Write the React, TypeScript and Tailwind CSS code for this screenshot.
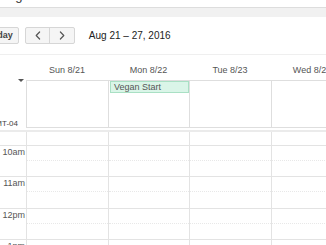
import * as React from "react"

const days = ["Sun 8/21", "Mon 8/22", "Tue 8/23", "Wed 8/24"]

const hours = [
  { label: "10am", height: "h-[31px]" },
  { label: "11am", height: "h-[32px]" },
  { label: "12pm", height: "h-[31px]" },
  { label: "1pm", height: "h-[31px]" },
]

const cols = "grid grid-cols-[26px_82px_81px_82px_82px]"

function Chevron({ dir }: { dir: "left" | "right" }) {
  return (
    <svg width="6" height="9" viewBox="0 0 6 9" fill="none" stroke="#555" strokeWidth="1.2" strokeLinecap="round" strokeLinejoin="round">
      {dir === "left" ? <path d="M4.6 1 L1.2 4.5 L4.6 8" /> : <path d="M1.4 1 L4.8 4.5 L1.4 8" />}
    </svg>
  )
}

export default function App() {
  return (
    <div className="h-[245px] w-[326px] overflow-hidden bg-white font-['Liberation_Sans',Arial,sans-serif]">
      {/* cut-off title line above the toolbar */}
      <div className="h-[7px] overflow-hidden">
        <div className="-mt-[11px] pl-[8px] text-[13px] leading-[13px] text-[#333]">ng</div>
      </div>
      <div className="h-[10px] border-t border-[#dddddd] bg-[#f1f1f1]" />

      <div className="border-b border-[#efefef] pt-[10px] pb-[10px]">
        <div className="flex h-[17px] items-center">
          <button type="button"
            className="-ml-[19px] flex h-[17px] items-center rounded-[2px] border border-[#d6d6d6] bg-[#f5f5f5] px-[5px] text-[9px] font-bold text-[#444]">
            Today
          </button>
          <div className="ml-[6px] flex h-[17px] w-[50px] rounded-[2px] border border-[#d6d6d6] bg-[#f5f5f5]">
            <button type="button" className="flex flex-1 items-center justify-center border-r border-[#d6d6d6]">
              <Chevron dir="left" />
            </button>
            <button type="button" className="flex flex-1 items-center justify-center">
              <Chevron dir="right" />
            </button>
          </div>
          <span className="ml-[14px] text-[10px] text-[#222]">Aug 21 – 27, 2016</span>
        </div>
      </div>

      <div className={`${cols} h-[25px]`}>
        <div />
        {days.map((day) => (
          <div key={day} className="pt-[10px] text-center text-[9px] leading-[10px] whitespace-nowrap text-[#555]">{day}</div>
        ))}
      </div>

      <div className={`${cols} h-[48px]`}>
        <div className="flex flex-col items-end justify-between pr-[2px]">
          <span className="-mt-[1px] h-0 w-0 border-x-[3px] border-t-[3px] border-x-transparent border-t-[#555]" />
          <span className="pr-[6px] text-[8px] leading-[9px] whitespace-nowrap text-[#444]">GMT-04</span>
        </div>
        {days.map((day, i) => (
          <div key={day} className="border-y border-l border-[#dedede]">
            {i === 1 && (
              <div className="ml-[1px] h-[12px] border border-[#a9e0c4] bg-[#daf5e8] pl-[3px] text-[9px] leading-[10px] whitespace-nowrap text-[#555]">
                Vegan Start
              </div>
            )}
          </div>
        ))}
      </div>

      <div className="mt-[2px] h-[2px] bg-[#ebebeb]" />

      <div className={`${cols} h-[13px]`}>
        <div />
        {days.map((day) => (
          <div key={day} className="border-l border-[#e3e3e3]" />
        ))}
      </div>

      {hours.map((hour) => (
        <div key={hour.label} className={`${cols} ${hour.height} border-t border-[#e3e3e3]`}>
          <div className="pt-[1px] pr-[1px] text-right text-[9px] leading-[10px] text-[#555]">{hour.label}</div>
          {days.map((day) => (
            <div key={day} className="border-l border-[#e3e3e3]">
              <div className="h-[15px] border-b border-dotted border-[#e8e8e8]" />
            </div>
          ))}
        </div>
      ))}
    </div>
  )
}
